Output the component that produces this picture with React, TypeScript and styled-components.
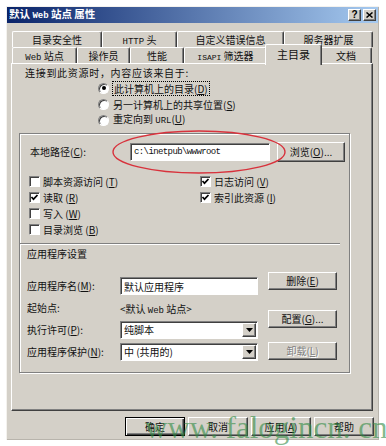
import React from "react";
import styled, { createGlobalStyle, css } from "styled-components";

const face = "#d4d0c8";
const shade = "#808080";
const dark = "#404040";

const GlobalStyle = createGlobalStyle`
  html, body { margin: 0; padding: 0; background: #fff; }
  body {
    font-family: "Noto Sans CJK SC", "Noto Sans", sans-serif;
    font-size: 10px;
    color: #111;
  }
`;

const raised = css`
  border: 1px solid;
  border-color: #fff ${dark} ${dark} #fff;
  box-shadow: inset -1px -1px 0 ${shade};
`;

const sunken = css`
  border: 1px solid;
  border-color: ${shade} #fff #fff ${shade};
  box-shadow: inset 1px 1px 0 ${dark};
`;

const Page = styled.div`
  position: relative;
  width: 386px;
  height: 446px;
  overflow: hidden;
  box-sizing: border-box;
  padding: 6px 0 0 6px;
`;

const Window = styled.div`
  width: 373px;
  height: 434px;
  box-sizing: border-box;
  padding: 1px;
  background: ${face};
  box-shadow: inset 1px 1px 0 #f4f2ee, inset -1px -1px 0 #b8b4ac;
  display: flex;
  flex-direction: column;
`;

const TitleBar = styled.div`
  height: 16px;
  display: flex;
  align-items: center;
  justify-content: space-between;
  padding: 0 2px 0 2px;
  background: linear-gradient(to right, #0a246a, #a6caf0);
`;

const Title = styled.span`
  color: #fff;
  font-weight: bold;
  font-size: 10.5px;
  line-height: 16px;
`;

const CaptionButtons = styled.div`
  display: flex;
  gap: 2px;
`;

const CaptionButton = styled.div`
  width: 13px;
  height: 12px;
  box-sizing: border-box;
  ${raised};
  background: ${face};
  display: flex;
  align-items: center;
  justify-content: center;
  font-family: "Liberation Sans", sans-serif;
  font-weight: bold;
  font-size: 10px;
  line-height: 10px;
  color: #000;
`;

const Body = styled.div`
  flex: 1;
  display: flex;
  flex-direction: column;
  padding: 0 4px 0 4px;
`;

const TabStrip = styled.div`
  margin: 8px 0 0 1px;
  display: flex;
  flex-direction: column;
`;

const TabRow = styled.div`
  display: flex;
  height: 16px;
`;

const Tab = styled.div<{ $w: number; $active?: boolean }>`
  width: ${(p) => p.$w + (p.$active ? 4 : 0)}px;
  height: ${(p) => (p.$active ? 21 : 16)}px;
  margin: ${(p) => (p.$active ? "-3px -2px 0" : "0")};
  position: relative;
  z-index: ${(p) => (p.$active ? 2 : 0)};
  box-sizing: border-box;
  background: ${face};
  border-top: 1px solid #fff;
  border-left: 1px solid #fff;
  border-right: 1px solid ${dark};
  border-radius: 2px 2px 0 0;
  box-shadow: inset -1px 0 0 ${shade};
  text-align: center;
  font-size: ${(p) => (p.$active ? 11 : 10)}px;
  line-height: ${(p) => (p.$active ? 18 : 15)}px;
  white-space: nowrap;
`;

const Lat = styled.span<{ $size?: number }>`
  font-family: "Liberation Mono", monospace;
  font-size: ${(p) => p.$size ?? 9}px;
`;

const Panel = styled.div`
  width: 362px;
  height: 348px;
  box-sizing: border-box;
  border: 1px solid;
  border-color: #fff ${dark} ${dark} #fff;
  box-shadow: inset -1px -1px 0 ${shade};
  padding: 2px 0 0 7px;
  display: flex;
  flex-direction: column;
`;

const Heading = styled.div`
  margin-left: 6px;
  line-height: 14px;
  height: 14px;
  letter-spacing: 0.7px;
`;

const RadioList = styled.div`
  margin-left: 79px;
  display: flex;
  flex-direction: column;
`;

const OptionRow = styled.label`
  height: 16px;
  display: flex;
  align-items: center;
  gap: 4px;
  line-height: 13px;
  white-space: nowrap;
`;

const RadioDot = styled.span<{ $on?: boolean }>`
  width: 11px;
  height: 11px;
  box-sizing: border-box;
  border-radius: 50%;
  background: #fff;
  border: 1px solid;
  border-color: ${shade} #fff #fff ${shade};
  box-shadow: inset 1px 1px 0 ${dark};
  display: flex;
  align-items: center;
  justify-content: center;
  &::after {
    content: "";
    width: 4px;
    height: 4px;
    border-radius: 50%;
    background: ${(p) => (p.$on ? "#000" : "transparent")};
  }
`;

const Focus = styled.span`
  outline: 1px dotted #000;
  padding: 0 1px;
`;

const Frame = styled.div`
  margin-top: 5px;
  width: 331px;
  height: 240px;
  box-sizing: border-box;
  border: 1px solid ${shade};
  box-shadow: 1px 1px 0 #fff, inset 1px 1px 0 #fff;
  display: flex;
  flex-direction: column;
`;

const PathRow = styled.div`
  margin-top: 8px;
  height: 20px;
  padding-left: 10px;
  display: flex;
  align-items: center;
`;

const FieldLabel = styled.span<{ $w?: number }>`
  width: ${(p) => p.$w ?? 100}px;
  line-height: 14px;
  white-space: nowrap;
`;

const TextBox = styled.div<{ $w: number }>`
  width: ${(p) => p.$w}px;
  height: 18px;
  box-sizing: border-box;
  ${sunken};
  background: #fff;
  padding-left: 3px;
  display: flex;
  align-items: center;
  white-space: nowrap;
  overflow: hidden;
`;

const Button = styled.div<{ $w?: number; $top?: number; $disabled?: boolean; $default?: boolean }>`
  width: ${(p) => p.$w ?? 69}px;
  height: ${(p) => (p.$default !== undefined ? 19 : 18)}px;
  margin-top: ${(p) => p.$top ?? 0}px;
  box-sizing: border-box;
  background: ${face};
  ${(p) =>
    p.$default
      ? css`
          border: 1px solid #000;
          box-shadow: inset 1px 1px 0 #fff, inset -1px -1px 0 ${dark}, inset -2px -2px 0 ${shade};
        `
      : raised};
  display: flex;
  align-items: center;
  justify-content: center;
  line-height: 14px;
  white-space: nowrap;
  color: ${(p) => (p.$disabled ? shade : "#111")};
  text-shadow: ${(p) => (p.$disabled ? "1px 1px 0 #fff" : "none")};
`;

const PathButton = styled(Button)`
  margin-left: 7px;
  height: 20px;
`;

const CheckColumns = styled.div`
  margin-top: 11px;
  padding-left: 9px;
  display: flex;
`;

const CheckColumn = styled.div<{ $w?: number }>`
  width: ${(p) => (p.$w ? `${p.$w}px` : "auto")};
  display: flex;
  flex-direction: column;
`;

const CheckRow = styled(OptionRow)`
  gap: 3px;
`;

const CheckBox = styled.span`
  width: 11px;
  height: 11px;
  box-sizing: border-box;
  background: #fff;
  border: 1px solid;
  border-color: ${shade} #fff #fff ${shade};
  box-shadow: inset 1px 1px 0 ${dark};
  display: flex;
  align-items: center;
  justify-content: center;
`;

const Separator = styled.div`
  margin-top: 6px;
  width: 320px;
  border-top: 1px solid ${shade};
  border-bottom: 1px solid #fff;
`;

const SectionTitle = styled.div`
  margin: 2px 0 0 7px;
  line-height: 14px;
`;

const AppArea = styled.div`
  margin-top: 11px;
  padding-left: 7px;
  display: flex;
`;

const AppGrid = styled.div`
  padding-top: 5px;
  display: grid;
  grid-template-columns: 93px 138px;
  grid-auto-rows: 18px;
  row-gap: 4px;
  align-items: center;
`;

const AppButtons = styled.div`
  margin-left: 10px;
  display: flex;
  flex-direction: column;
`;

const Combo = styled.div`
  width: 138px;
  height: 18px;
  box-sizing: border-box;
  ${sunken};
  background: #fff;
  padding: 1px 1px 1px 3px;
  display: flex;
  align-items: stretch;
`;

const ComboValue = styled.span`
  flex: 1;
  line-height: 14px;
  white-space: nowrap;
`;

const DropButton = styled.span`
  width: 14px;
  box-sizing: border-box;
  ${raised};
  background: ${face};
  display: flex;
  align-items: center;
  justify-content: center;
`;

const Footer = styled.div`
  margin-top: 6px;
  display: flex;
  justify-content: flex-end;
  gap: 3px;
`;

const Watermark = styled.div`
  position: absolute;
  left: 145px;
  top: 412px;
  font-family: "Liberation Serif", serif;
  font-size: 31px;
  line-height: 31px;
  color: rgba(50, 140, 70, 0.62);
  white-space: nowrap;
  pointer-events: none;
`;

const Ring = styled.svg`
  position: absolute;
  left: 111px;
  top: 129px;
  pointer-events: none;
`;

const backTabs = [
  { label: <>目录安全性</>, width: 90 },
  { label: <><Lat>HTTP</Lat> 头</>, width: 75 },
  { label: <>自定义错误信息</>, width: 107 },
  { label: <>服务器扩展</>, width: 89 },
];

const frontTabs = [
  { label: <><Lat>Web</Lat> 站点</>, width: 65 },
  { label: <>操作员</>, width: 53 },
  { label: <>性能</>, width: 54 },
  { label: <><Lat $size={8}>ISAPI</Lat> 筛选器</>, width: 83 },
  { label: <>主目录</>, width: 53, active: true },
  { label: <>文档</>, width: 52 },
];

const leftChecks = [
  { label: "脚本资源访问", key: "T", on: false },
  { label: "读取", key: "R", on: true },
  { label: "写入", key: "W", on: false },
  { label: "目录浏览", key: "B", on: false },
];

const rightChecks = [
  { label: "日志访问", key: "V", on: true },
  { label: "索引此资源", key: "I", on: true },
];

const Key: React.FC<{ k: string }> = ({ k }) => (
  <>
    (<u>{k}</u>)
  </>
);

const Tick = () => (
  <svg width="9" height="9" viewBox="0 0 9 9">
    <polyline points="1.5,4 3.5,6.2 7.5,2" fill="none" stroke="#000" strokeWidth="1.7" />
  </svg>
);

const Arrow = () => (
  <svg width="7" height="4" viewBox="0 0 7 4">
    <polygon points="0,0 7,0 3.5,4" fill="#000" />
  </svg>
);

const Check: React.FC<{ label: string; k: string; on: boolean }> = ({ label, k, on }) => (
  <CheckRow>
    <CheckBox>{on && <Tick />}</CheckBox>
    <span>
      {label} <Key k={k} />
    </span>
  </CheckRow>
);

export default function App() {
  return (
    <Page>
      <GlobalStyle />
      <Window>
        <TitleBar>
          <Title>
            默认 <Lat>Web</Lat> 站点 属性
          </Title>
          <CaptionButtons>
            <CaptionButton>?</CaptionButton>
            <CaptionButton>
              <svg width="7" height="6" viewBox="0 0 7 6">
                <path d="M0.5 0.5 L6.5 5.5 M6.5 0.5 L0.5 5.5" stroke="#000" strokeWidth="1.5" />
              </svg>
            </CaptionButton>
          </CaptionButtons>
        </TitleBar>
        <Body>
          <TabStrip>
            <TabRow>
              {backTabs.map((t, i) => (
                <Tab key={i} $w={t.width}>
                  {t.label}
                </Tab>
              ))}
            </TabRow>
            <TabRow>
              {frontTabs.map((t, i) => (
                <Tab key={i} $w={t.width} $active={t.active}>
                  {t.label}
                </Tab>
              ))}
            </TabRow>
          </TabStrip>
          <Panel>
            <Heading>连接到此资源时，内容应该来自于:</Heading>
            <RadioList>
              <OptionRow>
                <RadioDot $on />
                <Focus>
                  此计算机上的目录<Key k="D" />
                </Focus>
              </OptionRow>
              <OptionRow>
                <RadioDot />
                <span>
                  另一计算机上的共享位置<Key k="S" />
                </span>
              </OptionRow>
              <OptionRow>
                <RadioDot />
                <span>
                  重定向到 <Lat>URL</Lat>
                  <Key k="U" />
                </span>
              </OptionRow>
            </RadioList>
            <Frame>
              <PathRow>
                <FieldLabel>
                  本地路径<Key k="C" />:
                </FieldLabel>
                <TextBox $w={140}>
                  <Lat $size={9} style={{ letterSpacing: "-0.6px" }}>
                    c:\inetpub\wwwroot
                  </Lat>
                </TextBox>
                <PathButton $w={68}>
                  浏览<Key k="O" />...
                </PathButton>
              </PathRow>
              <CheckColumns>
                <CheckColumn $w={171}>
                  {leftChecks.map((c) => (
                    <Check key={c.key} label={c.label} k={c.key} on={c.on} />
                  ))}
                </CheckColumn>
                <CheckColumn>
                  {rightChecks.map((c) => (
                    <Check key={c.key} label={c.label} k={c.key} on={c.on} />
                  ))}
                </CheckColumn>
              </CheckColumns>
              <Separator />
              <SectionTitle>应用程序设置</SectionTitle>
              <AppArea>
                <AppGrid>
                  <FieldLabel $w={93}>
                    应用程序名<Key k="M" />:
                  </FieldLabel>
                  <TextBox $w={138}>默认应用程序</TextBox>
                  <FieldLabel $w={93}>起始点:</FieldLabel>
                  <span style={{ whiteSpace: "nowrap" }}>
                    &lt;默认 <Lat>Web</Lat> 站点&gt;
                  </span>
                  <FieldLabel $w={93}>
                    执行许可<Key k="P" />:
                  </FieldLabel>
                  <Combo>
                    <ComboValue>纯脚本</ComboValue>
                    <DropButton>
                      <Arrow />
                    </DropButton>
                  </Combo>
                  <FieldLabel $w={93}>
                    应用程序保护<Key k="N" />:
                  </FieldLabel>
                  <Combo>
                    <ComboValue>中 (共用的)</ComboValue>
                    <DropButton>
                      <Arrow />
                    </DropButton>
                  </Combo>
                </AppGrid>
                <AppButtons>
                  <Button>
                    删除<Key k="E" />
                  </Button>
                  <Button $top={20}>
                    配置<Key k="G" />...
                  </Button>
                  <Button $top={14} $disabled>
                    卸载<Key k="L" />
                  </Button>
                </AppButtons>
              </AppArea>
            </Frame>
          </Panel>
          <Footer>
            <Button $w={60} $default>
              确定
            </Button>
            <Button $w={60} $default={false}>
              取消
            </Button>
            <Button $w={60} $default={false}>
              应用<Key k="A" />
            </Button>
            <Button $w={60} $default={false}>
              帮助
            </Button>
          </Footer>
        </Body>
      </Window>
      <Ring width="176" height="46" viewBox="0 0 176 46">
        <ellipse cx="88" cy="23" rx="86" ry="21" fill="none" stroke="#d8323c" strokeWidth="1.4" />
      </Ring>
      <Watermark>www. falogincn. cn</Watermark>
    </Page>
  );
}
